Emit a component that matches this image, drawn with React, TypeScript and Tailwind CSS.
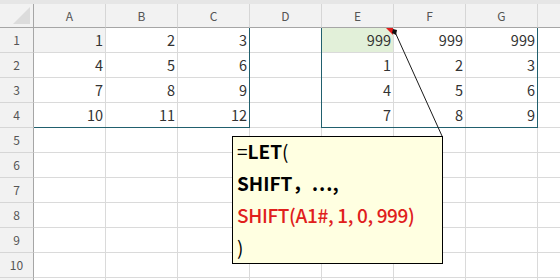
const cols = ["A", "B", "C", "D", "E", "F", "G", "H"];

// cell values keyed by row, column index
const values: Record<number, (number | null)[]> = {
  1: [1, 2, 3, null, 999, 999, 999, null],
  2: [4, 5, 6, null, 1, 2, 3, null],
  3: [7, 8, 9, null, 4, 5, 6, null],
  4: [10, 11, 12, null, 7, 8, 9, null],
};

const rows = Array.from({ length: 11 }, (_, i) => i + 1);

function cellBg(row: number, col: number) {
  if (row === 1 && col === 0) return "bg-[#f3f3f3]";
  if (row === 1 && col === 4) return "bg-[#e2f0d9]";
  return "bg-white";
}

export default function App() {
  return (
    <div
      className="relative h-[280px] w-[560px] overflow-hidden bg-white"
      style={{ fontFamily: '"Noto Sans CJK JP", "Noto Sans", sans-serif' }}
    >
      <div className="h-[4px] bg-[#e6e6e6]" />

      <div className="grid grid-cols-[34px_repeat(8,72px)]">
        {/* select-all corner */}
        <div className="relative h-[24px] border-b border-r border-[#a6a6a6] bg-[#f2f2f2]">
          <div className="absolute bottom-[3px] right-[3px] h-0 w-0 border-b-[17px] border-l-[17px] border-b-[#dcdcdc] border-l-transparent" />
        </div>
        {cols.map((c) => (
          <div
            key={c}
            className="flex h-[24px] items-center justify-center border-b border-r border-b-[#a6a6a6] border-r-[#d6d6d6] bg-[#f2f2f2] text-[12px] text-[#555]"
          >
            {c}
          </div>
        ))}

        {rows.map((r) => (
          <div key={r} className="contents">
            <div className="flex h-[25px] items-center justify-center border-b border-r border-b-[#d6d6d6] border-r-[#a6a6a6] bg-[#f2f2f2] text-[12px] text-[#555]">
              {r}
            </div>
            {cols.map((c, ci) => (
              <div
                key={c}
                className={`h-[25px] border-b border-r border-[#dadada] pr-[2px] text-right text-[14.5px] leading-[24px] text-[#333] ${cellBg(r, ci)}`}
              >
                {values[r]?.[ci] ?? ""}
              </div>
            ))}
          </div>
        ))}
      </div>

      {/* spill range outlines */}
      <div className="absolute left-[34px] top-[28px] h-[100px] w-[216px] border-b border-r border-[#21606e]" />
      <div className="absolute left-[321px] top-[28px] h-[100px] w-[217px] border-b border-l border-r border-[#21606e]" />

      {/* comment marker and leader line */}
      <svg className="absolute left-0 top-0" width="560" height="280">
        <polygon points="386,28 393,28 393,35" fill="#e21b1b" />
        <line x1="395" y1="32" x2="442" y2="136" stroke="#1a1a1a" strokeWidth="1" />
        <polygon points="393,29 397,30 396,35 392,33" fill="#111" />
      </svg>

      <div className="absolute left-[232px] top-[136px] h-[128px] w-[211px] border border-black bg-[#ffffe1] pl-[4px] text-[19px] leading-[32px] text-black">
        <div className="-mt-[2px]">
          <div>
            =<span className="font-bold">LET</span>(
          </div>
          <div className="font-bold">SHIFT，…,</div>
          <div className="font-medium tracking-[-0.35px] text-[#e0201c]">
            SHIFT(A1#, 1, 0, 999)
          </div>
          <div>)</div>
        </div>
      </div>
    </div>
  );
}
